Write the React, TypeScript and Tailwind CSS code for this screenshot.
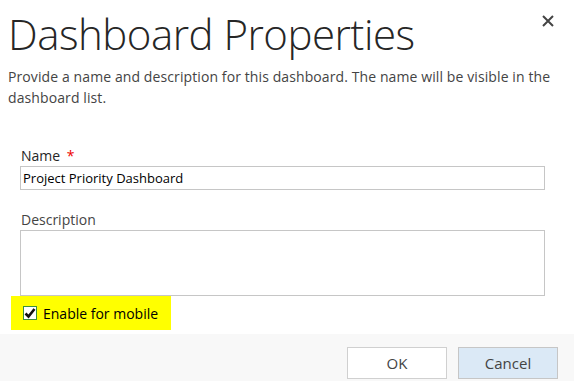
import React from "react";

const font = { fontFamily: '"Open Sans", "Liberation Sans", sans-serif' };

export default function App() {
  const [name, setName] = React.useState("Project Priority Dashboard");
  const [desc, setDesc] = React.useState("");
  const [mobile, setMobile] = React.useState(true);

  return (
    <div
      className="relative flex h-[381px] w-[574px] flex-col overflow-hidden bg-white text-[#262626]"
      style={font}
    >
      <button className="absolute right-[20px] top-[15px] text-[#444]" aria-label="Close">
        <svg width="12" height="12" viewBox="0 0 12 12">
          <path d="M1 1L11 11M11 1L1 11" stroke="#444" strokeWidth="2" />
        </svg>
      </button>

      <div className="px-[8px] pt-[6px]">
        <h1 className="text-[42px] font-light leading-[56px] tracking-[-0.5px] text-[#262626]">
          Dashboard Properties
        </h1>
        <p className="mt-[4px] text-[14px] leading-[21px] tracking-[0.1px] text-[#444]">
          Provide a name and description for this dashboard. The name will be visible in the
          <br />
          dashboard list.
        </p>
      </div>

      <div className="flex flex-col px-[20px] pt-[38px]">
        <label htmlFor="name" className="pl-[1px] text-[14px] leading-[20px] text-[#262626]">
          Name <span className="ml-[3px] text-[#e00]">*</span>
        </label>
        <input
          id="name"
          value={name}
          onChange={(e) => setName(e.target.value)}
          className="h-[24px] w-[525px] border border-[#c6c6c6] px-[2px] text-[13px] text-[#000] outline-none"
        />

        <label htmlFor="desc" className="mt-[20px] pl-[1px] text-[14px] leading-[20px] text-[#444]">
          Description
        </label>
        <textarea
          id="desc"
          value={desc}
          onChange={(e) => setDesc(e.target.value)}
          className="h-[66px] w-[525px] resize-none border border-[#c6c6c6] px-[2px] text-[13px] outline-none"
        />
      </div>

      <div className="pl-[11px]">
        <label className="flex h-[34px] w-[160px] items-center gap-[6px] bg-[#ffff00] pl-[12px] text-[14px] text-[#000]">
          <span
            onClick={() => setMobile(!mobile)}
            className="flex h-[14px] w-[14px] items-center justify-center border border-[#3b8f3b] bg-white"
          >
            {mobile && (
              <svg width="12" height="12" viewBox="0 0 12 12">
                <path d="M1.5 6.5L4.5 9.5L10.5 2" stroke="#111" strokeWidth="2.6" fill="none" />
              </svg>
            )}
          </span>
          Enable for mobile
        </label>
      </div>

      <div className="mt-auto flex h-[47px] items-start justify-end gap-[11px] bg-[#f8f8f8] pr-[16px] pt-[13px]">
        <button className="h-[32px] w-[100px] border border-[#d0d0d0] bg-white text-[15px] text-[#444]">
          OK
        </button>
        <button className="h-[32px] w-[100px] border border-[#c6c6c6] bg-[#dbe9f6] text-[15px] text-[#444]">
          Cancel
        </button>
      </div>
    </div>
  );
}
